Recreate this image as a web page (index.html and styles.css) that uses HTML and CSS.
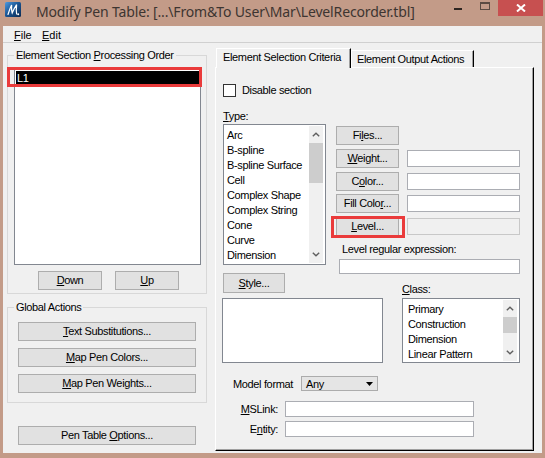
FILE: index.html
```html
<!DOCTYPE html>
<html>
<head>
<meta charset="utf-8">
<title>Modify Pen Table</title>
<link rel="stylesheet" href="styles.css">
</head>
<body>
<div class="window">
  <div class="titlebar">
    <svg class="app-icon" viewBox="0 0 16 15">
      <defs>
        <linearGradient id="ig" x1="0" y1="0" x2="1" y2="1">
          <stop offset="0" stop-color="#4f9be0"/>
          <stop offset="0.45" stop-color="#1b5796"/>
          <stop offset="1" stop-color="#0c2a52"/>
        </linearGradient>
      </defs>
      <rect x="0" y="0" width="16" height="15" rx="1.5" fill="url(#ig)"/>
      <path d="M3 12.5 C4.2 9 5.2 5.5 6.6 3 C6.4 6.5 6.6 9 7.2 11 C8.4 8 10 5 11.6 2.6 C11.2 6.5 11.2 9.5 11.6 12" fill="none" stroke="#fff" stroke-width="1.2" stroke-linecap="round"/>
      <circle cx="13.2" cy="12.2" r="1" fill="#fff"/>
    </svg>
    <div class="title">Modify Pen Table: [...\From&amp;To User\Mar\LevelRecorder.tbl]</div>
    <div class="caption">
      <div class="cap cap-min"><i></i></div>
      <div class="cap cap-max"><i></i></div>
      <div class="cap cap-close">
        <svg viewBox="0 0 10 8" width="10" height="8"><path d="M1 0.5 L9 7.5 M9 0.5 L1 7.5" stroke="#fff" stroke-width="2"/></svg>
      </div>
    </div>
  </div>

  <div class="client">
    <div class="menubar">
      <span class="menu-item m-file"><u>F</u>ile</span>
      <span class="menu-item"><u>E</u>dit</span>
    </div>

    <div class="main">
      <div class="leftcol">
        <fieldset class="group g-order">
          <legend>Element Section <u>P</u>rocessing Order</legend>
          <div class="listbox order-list">
            <div class="order-item selected">L1<span class="annot annot-l1"></span></div>
          </div>
          <div class="btnrow">
            <button class="btn btn-small"><u>D</u>own</button>
            <button class="btn btn-small"><u>U</u>p</button>
          </div>
        </fieldset>

        <fieldset class="group g-global">
          <legend>Global Actions</legend>
          <button class="btn btn-wide first"><u>T</u>ext Substitutions...</button>
          <button class="btn btn-wide"><u>M</u>ap Pen Colors...</button>
          <button class="btn btn-wide"><u>M</u>ap Pen Weights...</button>
        </fieldset>

        <button class="btn btn-wide btn-options">Pen Table <u>O</u>ptions...</button>
      </div>

      <div class="tabs">
        <div class="tabstrip">
          <div class="tab tab-active">Element Selection Criteria</div>
          <div class="tab tab-inactive">Element Output Actions</div>
        </div>
        <div class="panel">
          <div class="check-row">
            <span class="checkbox"></span>
            <span class="check-label">Disable section</span>
          </div>

          <div class="type-section">
            <div class="type-col">
              <div class="label"><u>T</u>ype:</div>
              <div class="listbox scroll-list type-list">
                <div class="items">
                  <div class="li">Arc</div>
                  <div class="li">B-spline</div>
                  <div class="li">B-spline Surface</div>
                  <div class="li">Cell</div>
                  <div class="li">Complex Shape</div>
                  <div class="li">Complex String</div>
                  <div class="li">Cone</div>
                  <div class="li">Curve</div>
                  <div class="li">Dimension</div>
                </div>
                <div class="vscroll">
                  <div class="sb-arrow"><svg viewBox="0 0 8 5" width="8" height="5"><path d="M0.8 4.2 L4 1.2 L7.2 4.2" fill="none" stroke="#606060" stroke-width="1.4"/></svg></div>
                  <div class="sb-thumb type-thumb"></div>
                  <div class="sb-track"></div>
                  <div class="sb-arrow"><svg viewBox="0 0 8 5" width="8" height="5"><path d="M0.8 0.8 L4 3.8 L7.2 0.8" fill="none" stroke="#606060" stroke-width="1.4"/></svg></div>
                </div>
              </div>
            </div>

            <div class="props-col">
              <div class="prop-row">
                <button class="btn btn-prop">Fi<u>l</u>es...</button>
              </div>
              <div class="prop-row">
                <button class="btn btn-prop"><u>W</u>eight...</button>
                <span class="field prop-field"></span>
              </div>
              <div class="prop-row">
                <button class="btn btn-prop">C<u>o</u>lor...</button>
                <span class="field prop-field"></span>
              </div>
              <div class="prop-row">
                <button class="btn btn-prop">Fill Colo<u>r</u>...</button>
                <span class="field prop-field"></span>
              </div>
              <div class="prop-row level-row">
                <button class="btn btn-prop"><u>L</u>evel...</button>
                <span class="field prop-field disabled"></span>
                <span class="annot annot-level"></span>
              </div>
              <div class="regex-label">Level regular expression:</div>
              <span class="field regex-field"></span>
            </div>
          </div>

          <div class="style-section">
            <div class="style-col">
              <button class="btn btn-style"><u>S</u>tyle...</button>
              <div class="style-box"></div>
            </div>
            <div class="class-col">
              <div class="label"><u>C</u>lass:</div>
              <div class="listbox scroll-list class-list">
                <div class="items">
                  <div class="li">Primary</div>
                  <div class="li">Construction</div>
                  <div class="li">Dimension</div>
                  <div class="li">Linear Pattern</div>
                </div>
                <div class="vscroll">
                  <div class="sb-arrow"><svg viewBox="0 0 8 5" width="8" height="5"><path d="M0.8 4.2 L4 1.2 L7.2 4.2" fill="none" stroke="#606060" stroke-width="1.4"/></svg></div>
                  <div class="sb-thumb class-thumb"></div>
                  <div class="sb-track"></div>
                  <div class="sb-arrow"><svg viewBox="0 0 8 5" width="8" height="5"><path d="M0.8 0.8 L4 3.8 L7.2 0.8" fill="none" stroke="#606060" stroke-width="1.4"/></svg></div>
                </div>
              </div>
            </div>
          </div>

          <div class="model-row">
            <span class="model-label">Model format</span>
            <div class="dropdown"><span>Any</span><svg viewBox="0 0 7 4" width="7" height="4"><path d="M0 0 L7 0 L3.5 4 Z" fill="#000"/></svg></div>
          </div>

          <div class="link-row">
            <span class="link-label"><u>M</u>SLink:</span>
            <span class="field link-field"></span>
          </div>
          <div class="link-row entity-row">
            <span class="link-label">E<u>n</u>tity:</span>
            <span class="field link-field"></span>
          </div>
        </div>
      </div>
    </div>
  </div>
</div>
</body>
</html>
```

FILE: styles.css
```css
* { box-sizing: border-box; }

html, body {
  margin: 0;
  padding: 0;
}

body {
  width: 545px;
  height: 458px;
  overflow: hidden;
  background: #c39b88;
  font-family: "Liberation Sans", Arial, sans-serif;
  font-size: 11px;
  letter-spacing: -0.35px;
  color: #000;
}

u { text-decoration: underline; text-underline-offset: 1px; }

.window {
  width: 545px;
  height: 458px;
  background: #c39b88;
  display: flex;
  flex-direction: column;
  padding: 0 3px 5px 3px;
}

/* ---------- title bar ---------- */
.titlebar {
  height: 26px;
  flex: none;
  display: flex;
  align-items: flex-start;
  margin: 0 -3px;
}

.app-icon {
  width: 16px;
  height: 15px;
  margin: 2px 0 0 5px;
  flex: none;
}

.title {
  flex: 1;
  margin: 1px 0 0 15px;
  font-family: "Noto Sans", "Open Sans", sans-serif;
  font-size: 14px;
  line-height: 22px;
  letter-spacing: -0.15px;
  color: #3d3531;
  white-space: nowrap;
}

.caption {
  display: flex;
  flex: none;
  margin-right: 2px;
}

.cap {
  height: 16px;
  display: flex;
  align-items: center;
  justify-content: center;
}

.cap-min { width: 28px; }
.cap-min i {
  display: block;
  width: 8px;
  height: 2px;
  background: #2e2622;
  margin-top: 2px;
}

.cap-max { width: 26px; align-items: flex-start; }
.cap-max i {
  display: block;
  width: 10px;
  height: 8px;
  margin-top: 2px;
  border: 1px solid #5b4b42;
  border-top-width: 2px;
}

.cap-close {
  width: 45px;
  background: #c75050;
}

/* ---------- client ---------- */
.client {
  flex: 1;
  background: #f0f0f0;
  display: flex;
  flex-direction: column;
}

.menubar {
  height: 17px;
  flex: none;
  display: flex;
  padding: 3px 0 0 11px;
  line-height: 13px;
  border-bottom: 1px solid #d0d0d0;
  letter-spacing: 0;
}

.m-file { width: 28px; }

.main {
  flex: 1;
  display: flex;
}

/* ---------- left column ---------- */
.leftcol {
  width: 204px;
  padding-left: 4px;
  flex: none;
  display: flex;
  flex-direction: column;
}

.group {
  margin: 0;
  padding: 0;
  border: 1px solid #d8d8d8;
  min-width: 0;
  width: 200px;
}

.group legend {
  padding: 0 2px;
  margin-left: 6px;
  line-height: 13px;
}

.g-order {
  margin-top: 6px;
  padding-bottom: 3px;
}

.listbox {
  background: #fff;
  border: 1px solid #828790;
}

.order-list {
  margin: 7px 5px 0 6px;
  height: 196px;
  padding: 1px;
}

.order-item {
  position: relative;
  height: 14px;
  line-height: 14px;
  padding-left: 1px;
  background: #000;
  color: #fff;
}

.annot {
  position: absolute;
  border: 3px solid #ea3b3b;
  pointer-events: none;
}

.annot-l1 {
  left: -9px;
  top: -4px;
  width: 195px;
  height: 20px;
}

.btn {
  font-family: inherit;
  font-size: 11px;
  letter-spacing: -0.35px;
  color: #000;
  background: #e1e1e1;
  border: 1px solid #adadad;
  border-radius: 0;
  padding: 0;
  margin: 0;
  height: 19px;
  line-height: 17px;
  text-align: center;
  display: block;
  flex: none;
}

.btnrow {
  display: flex;
  gap: 13px;
  margin-top: 6px;
  padding-left: 30px;
}

.btn-small { width: 64px; }

.g-global {
  margin-top: 7px;
  padding-bottom: 9px;
}

.btn-wide {
  width: 178px;
  margin-left: 10px;
  margin-top: 7px;
}

.btn-wide.first { margin-top: 8px; }

.btn-options {
  margin-top: 23px;
  margin-left: 11px;
}

/* ---------- tabs ---------- */
.tabs {
  margin-left: 8px;
  width: 319px;
  flex: none;
  display: flex;
  flex-direction: column;
}

.tabstrip {
  height: 24px;
  display: flex;
  align-items: flex-end;
  padding-left: 1px;
}

.tab {
  background: #f0f0f0;
  border-top: 1px solid #fff;
  border-left: 1px solid #fff;
  border-right: 1px solid #000;
  box-shadow: inset -1px 0 0 #a0a0a0;
  white-space: nowrap;
}

.tab-active {
  position: relative;
  z-index: 1;
  width: 135px;
  height: 20px;
  margin-bottom: -1px;
  padding: 2px 0 0 6px;
  line-height: 13px;
}

.tab-inactive {
  width: 123px;
  height: 17px;
  padding: 2px 0 0 5px;
  line-height: 13px;
}

.panel {
  height: 384px;
  background: #f0f0f0;
  border-top: 1px solid #fff;
  border-left: 1px solid #fff;
  border-right: 1px solid #000;
  border-bottom: 1px solid #000;
  box-shadow: inset -1px -1px 0 #a0a0a0;
  padding-left: 7px;
}

.check-row {
  margin-top: 16px;
  display: flex;
  align-items: center;
  height: 13px;
}

.checkbox {
  width: 13px;
  height: 13px;
  border: 1px solid #333;
  background: #fff;
  flex: none;
}

.check-label {
  margin-left: 6px;
  line-height: 13px;
}

.label { line-height: 13px; height: 13px; }

.type-section {
  margin-top: 13px;
  display: flex;
  align-items: flex-start;
}

.type-col { width: 103px; flex: none; }

.scroll-list {
  display: flex;
  padding: 1px 2px 1px 0;
}

.items {
  flex: 1;
  padding-top: 1.5px;
  white-space: nowrap;
  overflow: hidden;
}

.li { height: 15px; line-height: 15px; }

.type-list { margin-top: 1px; height: 141px; }
.type-list .items { padding-left: 3px; }

.vscroll {
  width: 14px;
  flex: none;
  display: flex;
  flex-direction: column;
  background: #f0f0f0;
}

.sb-arrow {
  height: 17px;
  flex: none;
  display: flex;
  align-items: center;
  justify-content: center;
}

.sb-thumb { background: #cdcdcd; flex: none; }
.type-thumb { height: 40px; }
.class-thumb { height: 16px; }
.sb-track { flex: 1; }

.props-col {
  margin-left: 10px;
  margin-top: 16px;
  width: 184px;
  flex: none;
}

.prop-row {
  display: flex;
  height: 19px;
  margin-top: 3.75px;
}

.prop-row:first-child { margin-top: 0; }

.level-row { position: relative; }

.btn-prop { width: 63px; }

.field {
  display: block;
  background: #fff;
  border: 1px solid #abadb3;
}

.prop-field {
  width: 113px;
  height: 17px;
  margin: 1px 0 0 8px;
}

.prop-field.disabled {
  background: #f0f0f0;
  border-color: #c8c8c8;
}

.annot-level {
  left: -5px;
  top: -1px;
  width: 74px;
  height: 22px;
}

.regex-label {
  margin: 6.5px 0 0 6px;
  line-height: 13px;
}

.regex-field {
  width: 181px;
  height: 15px;
  margin: 3.5px 0 0 3px;
}

.style-section {
  display: flex;
  align-items: flex-start;
  margin-top: -1px;
}

.style-col { width: 161px; flex: none; }

.btn-style { width: 62px; height: 20px; line-height: 18px; }

.style-box {
  margin: 5px 0 0 -1px;
  width: 161px;
  height: 65px;
  background: #fff;
  border: 1px solid #828790;
}

.class-col {
  margin: 9.5px 0 0 18px;
  width: 118px;
  flex: none;
}

.class-list { margin-top: 2.5px; height: 65px; }
.class-list .items { padding-left: 5px; }

.model-row {
  margin-top: 13px;
  display: flex;
  align-items: center;
  height: 15px;
}

.model-label {
  margin-left: 10px;
  width: 68px;
  flex: none;
}

.dropdown {
  width: 77px;
  height: 15px;
  border: 1px solid #acacac;
  background: #e5e5e5;
  display: flex;
  align-items: center;
  justify-content: space-between;
  padding: 0 4px 0 4px;
}

.link-row {
  display: flex;
  align-items: center;
  margin-top: 10px;
  height: 16px;
}

.entity-row { margin-top: 4px; }

.link-label {
  width: 55px;
  text-align: right;
  flex: none;
}

.link-field {
  width: 189px;
  height: 16px;
  margin-left: 7px;
}
```
